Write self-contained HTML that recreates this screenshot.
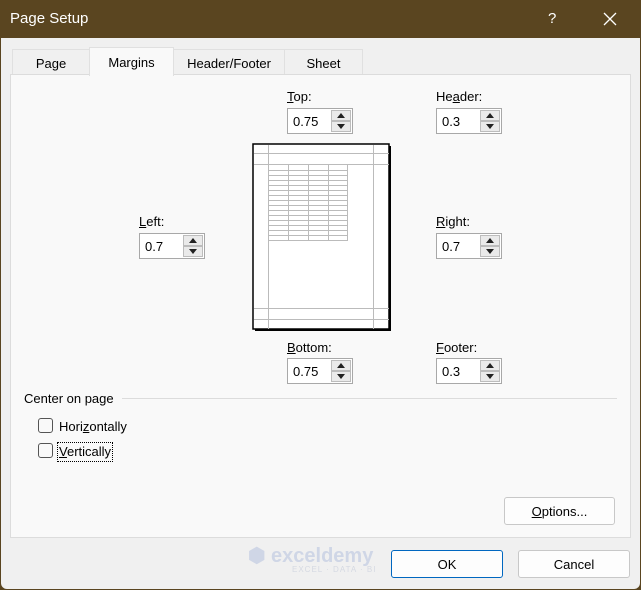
<!DOCTYPE html><html><head><style>
*{box-sizing:border-box;margin:0;padding:0}
body{width:641px;height:590px;background:#5a4520;font-family:"Liberation Sans",sans-serif;font-size:13px;color:#000;position:relative;overflow:hidden}
.win{position:absolute;left:1px;top:38px;width:639px;height:551px;background:#f0f0f0;border-radius:0 0 6px 6px}
.abs{position:absolute}
.title{left:10px;top:10px;color:#fff;font-size:15px}
.tab{position:absolute;top:49px;height:26px;background:#f0f0f0;border:1px solid #e0e0e0;border-bottom:none;text-align:center;padding-top:6px}
.panel{position:absolute;left:10px;top:74px;width:621px;height:464px;background:#f9f9f9;border:1px solid #dcdcdc}
.lbl{position:absolute}
.spin{position:absolute;width:66px;height:26px;border:1px solid #a8a8a8;background:#fff;padding:5px 0 0 5px}
.spin .b{position:absolute;right:1px;width:20px;height:11px;background:#eaeaea;border:1px solid #bcbcbc}
.spin .u{top:1px}.spin .d{top:12px}
.b:after{content:"";position:absolute;left:5px;border-left:4px solid transparent;border-right:4px solid transparent}
.u:after{top:2px;border-bottom:5px solid #222}
.d:after{top:2px;border-top:5px solid #222}
.btn{position:absolute;height:28px;border:1px solid #c8c8c8;background:#fdfdfd;border-radius:3px;text-align:center;padding-top:6px;font-size:13px}
.cb{position:absolute;width:15px;height:15px;border:1px solid #555;border-radius:3px;background:#f9f9f9}
u{text-decoration:underline}
</style></head><body>
<div class="abs title">Page Setup</div>
<div class="abs" style="left:548px;top:10px;color:#fff;font-size:15px">?</div>
<svg class="abs" style="left:603px;top:12px" width="14" height="14"><path d="M1 1L13 13M13 1L1 13" stroke="#fff" stroke-width="1.3"/></svg>
<div class="win"></div>
<div class="tab" style="left:12px;width:78px">Page</div>
<div class="tab" style="left:173px;width:112px">Header/Footer</div>
<div class="tab" style="left:284px;width:79px">Sheet</div>
<div class="panel"></div>
<div class="tab" style="left:89px;top:47px;width:85px;height:29px;background:#f9f9f9;z-index:2;padding-top:7px">Margins</div>

<div class="lbl" style="left:287px;top:89px"><u>T</u>op:</div>
<div class="spin" style="left:287px;top:108px">0.75<div class="b u"></div><div class="b d"></div></div>
<div class="lbl" style="left:436px;top:89px">He<u>a</u>der:</div>
<div class="spin" style="left:436px;top:108px">0.3<div class="b u"></div><div class="b d"></div></div>
<div class="lbl" style="left:139px;top:214px"><u>L</u>eft:</div>
<div class="spin" style="left:139px;top:233px">0.7<div class="b u"></div><div class="b d"></div></div>
<div class="lbl" style="left:436px;top:214px"><u>R</u>ight:</div>
<div class="spin" style="left:436px;top:233px">0.7<div class="b u"></div><div class="b d"></div></div>
<div class="lbl" style="left:287px;top:340px"><u>B</u>ottom:</div>
<div class="spin" style="left:287px;top:358px">0.75<div class="b u"></div><div class="b d"></div></div>
<div class="lbl" style="left:436px;top:340px"><u>F</u>ooter:</div>
<div class="spin" style="left:436px;top:358px">0.3<div class="b u"></div><div class="b d"></div></div>

<svg class="abs" style="left:250px;top:141px" width="144" height="192">
<rect x="5" y="5" width="136" height="185" fill="#000"/>
<rect x="3" y="3" width="136" height="185" fill="#fff" stroke="#000" stroke-width="1.5"/>
<g stroke="#bbb" stroke-width="1">
<path d="M18.5 4V188M123.5 4V188M4 12.5H139M4 23.5H139M4 167.5H139M4 178.5H139"/>
<path d="M18.5 24V99M38.5 24V99M58.5 24V99M78.5 24V99M97.5 24V99"/>
<path d="M18 29.5H98M18 34.5H98M18 39.5H98M18 44.5H98M18 49.5H98M18 54.5H98M18 59.5H98M18 64.5H98M18 69.5H98M18 74.5H98M18 79.5H98M18 84.5H98M18 89.5H98M18 94.5H98M18 99.5H98"/>
</g></svg>

<div class="lbl" style="left:24px;top:391px">Center on page</div>
<div class="abs" style="left:122px;top:398px;width:495px;height:1px;background:#dcdcdc"></div>
<div class="cb" style="left:38px;top:418px"></div>
<div class="lbl" style="left:59px;top:419px">Hori<u>z</u>ontally</div>
<div class="cb" style="left:38px;top:443px"></div>
<div class="lbl" style="left:57px;top:442px;border:1px dotted #000;padding:1px 1px 2px 1px"><u>V</u>ertically</div>

<div class="btn" style="left:504px;top:497px;width:111px"><u>O</u>ptions...</div>
<div class="abs" style="left:248px;top:543px;color:#cfd6e6;font-size:20px;font-weight:bold">⬢ exceldemy</div>
<div class="abs" style="left:292px;top:565px;color:#d5d9e2;font-size:8px;letter-spacing:1px">EXCEL · DATA · BI</div>
<div class="btn" style="left:391px;top:550px;width:112px;border-color:#0067c0">OK</div>
<div class="btn" style="left:518px;top:550px;width:112px">Cancel</div>
</body></html>
